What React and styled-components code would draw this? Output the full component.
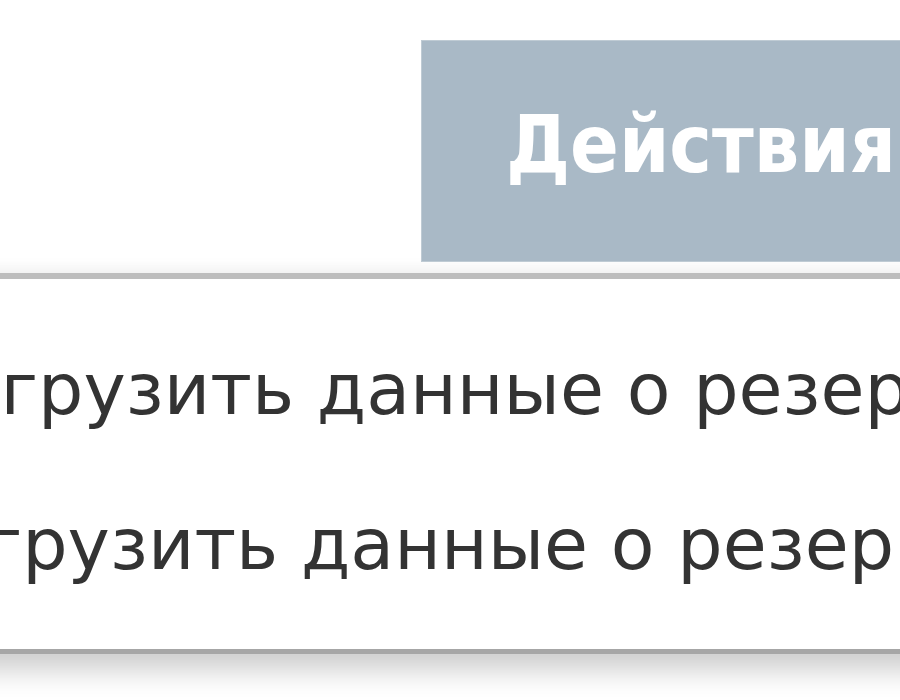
import styled, { createGlobalStyle } from "styled-components";

const GlobalStyle = createGlobalStyle`
    html, body {
        margin: 0;
        padding: 0;
        background: #ffffff;
    }
`;

const Page = styled.div`
    width: 900px;
    height: 700px;
    overflow: hidden;
    background: #ffffff;
    font-family: "DejaVu Sans", Verdana, sans-serif;
`;

const Toolbar = styled.div`
    display: flex;
    padding: 40px 0 0 421px;
`;

const ActionButton = styled.button`
    flex: none;
    width: 540px;
    height: 222px;
    padding: 0 0 14px 84px;
    display: flex;
    align-items: center;
    justify-content: flex-start;
    background: #a9b9c6;
    border: 1px solid #bfcbd4;
    color: #ffffff;
    font-family: "DejaVu Sans Condensed", "DejaVu Sans", sans-serif;
    font-weight: bold;
    font-size: 80px;
    cursor: pointer;
`;

const Menu = styled.ul`
    list-style: none;
    margin: 11px -40px 0 -105px;
    padding: 33px 0 27px;
    background: #ffffff;
    border-top: 6px solid #bdbdbd;
    border-bottom: 5px solid #a6a6a6;
    box-shadow: 0 -8px 12px rgba(0, 0, 0, 0.03), 0 16px 26px rgba(0, 0, 0, 0.2);
`;

const MenuItem = styled.li`
    padding: 37.5px 0 37.5px 0;
    line-height: 80px;
    font-size: 71.5px;
    color: #333333;
    white-space: nowrap;
`;

const App = () => {
    return (
        <Page>
            <GlobalStyle />
            <Toolbar>
                <ActionButton>Действия</ActionButton>
            </Toolbar>
            <Menu>
                <MenuItem>Выгрузить данные о резервах</MenuItem>
                <MenuItem>Загрузить данные о резервах</MenuItem>
            </Menu>
        </Page>
    );
};

export default App;
